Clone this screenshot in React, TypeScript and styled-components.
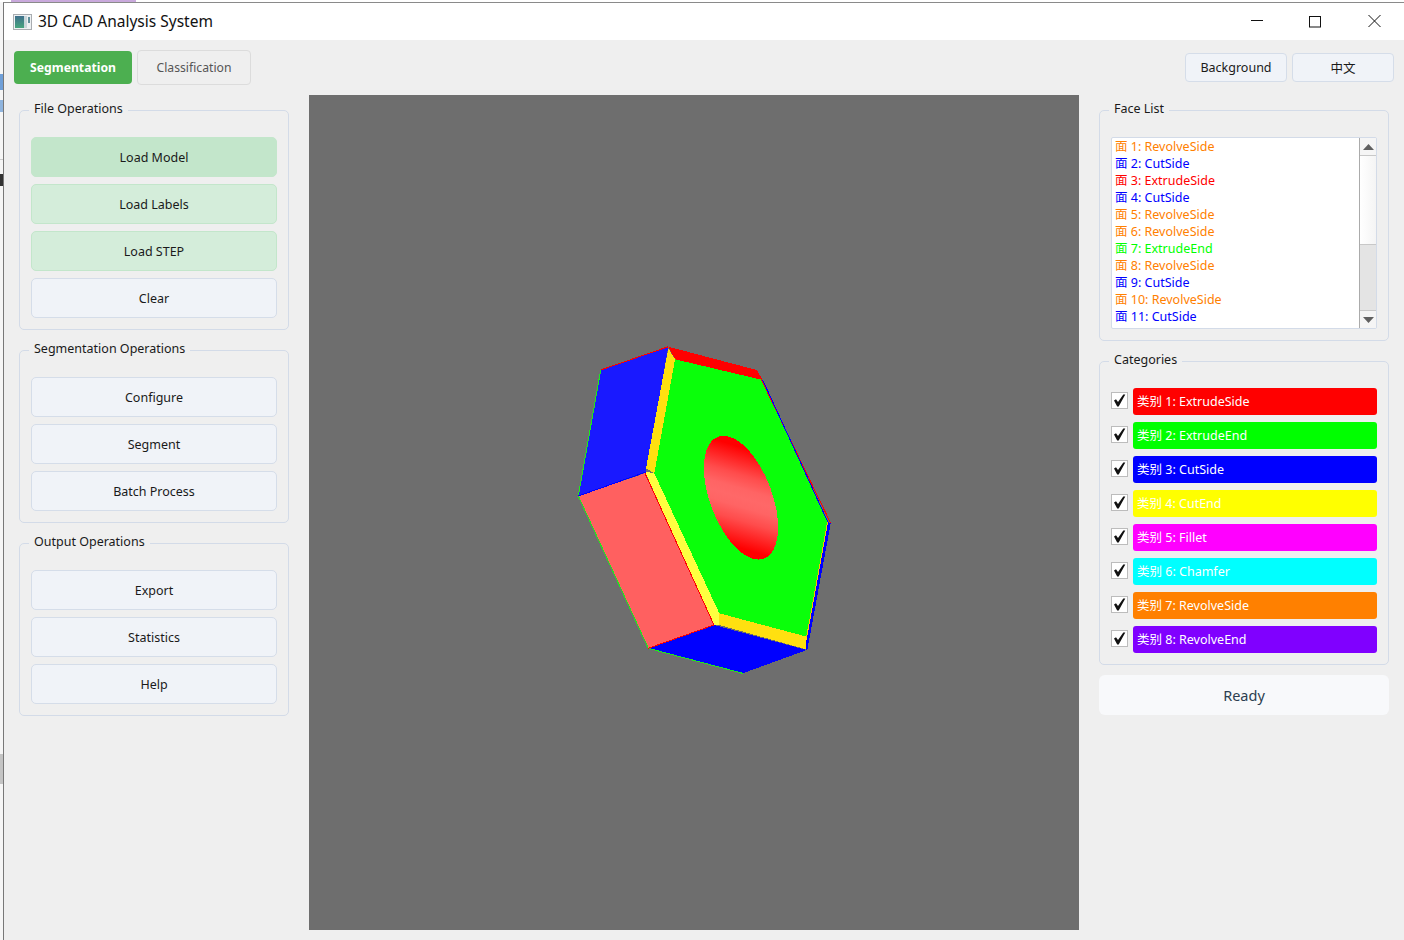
import React from 'react';
import styled, { createGlobalStyle } from 'styled-components';

const GlobalStyle = createGlobalStyle`
  html, body {
    margin: 0;
    padding: 0;
    background: #fff;
  }
  * {
    box-sizing: border-box;
  }
`;

const UI_FONT = `"Noto Sans", "Noto Sans CJK SC", sans-serif`;

const Page = styled.div`
  width: 1404px;
  height: 940px;
  overflow: hidden;
  display: flex;
  flex-direction: column;
  font-family: ${UI_FONT};
  font-size: 12.5px;
  color: #1a1a1a;
`;

/* what is left of the desktop behind the window */
const DesktopTop = styled.div`
  height: 2px;
  flex: none;
  background: linear-gradient(to right, #fff 11px, #c9a9dc 11px, #c9a9dc 136px, #fff 136px);
`;

const DesktopRow = styled.div`
  flex: 1;
  display: flex;
  min-height: 0;
`;

const DesktopLeft = styled.div`
  width: 3px;
  flex: none;
  background: linear-gradient(
    to bottom,
    #f6f6f6 72px,
    #6f9fd8 72px,
    #6f9fd8 88px,
    #f6f6f6 88px,
    #f6f6f6 98px,
    #8fb4de 98px,
    #8fb4de 110px,
    #f6f6f6 110px,
    #f6f6f6 157px,
    #ccc 157px,
    #ccc 158px,
    #f6f6f6 158px,
    #f6f6f6 172px,
    #333 172px,
    #333 184px,
    #f6f6f6 184px,
    #f6f6f6 752px,
    #c4c4c4 752px,
    #c4c4c4 782px,
    #f6f6f6 782px
  );
`;

const Window = styled.div`
  flex: 1;
  min-width: 0;
  display: flex;
  flex-direction: column;
  border-left: 1px solid #787878;
  border-top: 1px solid #8a8a8a;
  background: #efefef;
`;

const TitleBar = styled.div`
  height: 37px;
  flex: none;
  display: flex;
  align-items: center;
  background: #fff;
  padding-left: 9px;
`;

const TitleText = styled.span`
  margin: -2px 0 0 6px;
  font-size: 15.5px;
  color: #111;
`;

const WindowControls = styled.div`
  margin-left: auto;
  display: flex;
  align-items: center;
  height: 100%;
`;

const ControlSlot = styled.div`
  width: 59px;
  height: 100%;
  display: flex;
  align-items: center;
  justify-content: center;
`;

const Header = styled.div`
  height: 35px;
  flex: none;
  margin-top: 10px;
  padding: 0 10px;
  display: flex;
  align-items: center;
  justify-content: space-between;
`;

const HeaderGroup = styled.div<{ $gap: number }>`
  display: flex;
  align-items: center;
  gap: ${(p) => p.$gap}px;
`;

const Tab = styled.button<{ $active?: boolean }>`
  font-family: inherit;
  font-size: 12.2px;
  border-radius: 4px;
  padding: 0;
  ${(p) =>
    p.$active
      ? `
    width: 118px;
    height: 33px;
    border: 0;
    background: #4caf50;
    color: #fff;
    font-weight: 700;
  `
      : `
    width: 114px;
    height: 35px;
    border: 1px solid #dcdcdc;
    background: #efefef;
    color: #555;
  `}
`;

const TopButton = styled.button`
  width: 102px;
  height: 29px;
  padding: 0;
  font-family: inherit;
  font-size: 12.5px;
  color: #1a1a1a;
  background: #f0f3f8;
  border: 1px solid #d5dde9;
  border-radius: 4px;
`;

const Body = styled.div`
  flex: 1;
  min-height: 0;
  margin-top: 10px;
  padding: 0 15px 10px;
  display: grid;
  grid-template-columns: 270px 770px 290px;
  column-gap: 20px;
`;

const SideColumn = styled.div<{ $gap: number }>`
  padding-top: 6px;
  display: flex;
  flex-direction: column;
  gap: ${(p) => p.$gap}px;
`;

const Group = styled.fieldset`
  margin: 0;
  min-width: 0;
  padding: 18px 11px 11px;
  border: 1px solid #d3dbe8;
  border-radius: 5px;
`;

const GroupTitle = styled.legend`
  margin-left: -2px;
  padding: 0 5px;
  height: 18px;
  line-height: 15px;
  font-size: 12.5px;
  color: #1a1a1a;
`;

const ButtonStack = styled.div`
  display: flex;
  flex-direction: column;
  gap: 7px;
`;

type Tone = 'strong' | 'soft' | 'plain';

const toneStyles: Record<Tone, string> = {
  strong: 'background: #c3e6cb; border-color: #c3e6cb;',
  soft: 'background: #d4edda; border-color: #c3e6cb;',
  plain: 'background: #f0f3f8; border-color: #d5dde9;',
};

const ActionButton = styled.button<{ $tone: Tone }>`
  height: 40px;
  padding: 0;
  font-family: inherit;
  font-size: 12.5px;
  color: #1a1a1a;
  border: 1px solid;
  border-radius: 5px;
  ${(p) => toneStyles[p.$tone]}
`;

const Viewport = styled.div`
  background: #6e6e6e;
  min-height: 0;
`;

const ModelSvg = styled.svg`
  display: block;
  width: 770px;
  height: 835px;
`;

const FaceListBox = styled.div`
  height: 192px;
  display: flex;
  background: #fff;
  border: 1px solid #d3dbe8;
  border-radius: 2px;
  overflow: hidden;
`;

const FaceRows = styled.ul`
  flex: 1;
  margin: 0;
  padding: 0 0 0 3px;
  list-style: none;
`;

const FaceRow = styled.li<{ $color: string }>`
  height: 17px;
  line-height: 17px;
  font-size: 12.5px;
  white-space: nowrap;
  color: ${(p) => p.$color};
`;

const ScrollBar = styled.div`
  width: 17px;
  flex: none;
  display: flex;
  flex-direction: column;
  border-left: 1px solid #ababab;
`;

const ScrollArrow = styled.div`
  height: 17px;
  flex: none;
  display: flex;
  align-items: center;
  justify-content: center;
  background: #f5f5f5;
`;

const ScrollThumb = styled.div`
  height: 90px;
  flex: none;
  background: linear-gradient(to right, #fff, #f4f4f4);
  border-top: 1px solid #c8c8c8;
  border-bottom: 1px solid #c8c8c8;
`;

const ScrollTrack = styled.div`
  flex: 1;
  background: #e4e4e4;
  border-bottom: 1px solid #c8c8c8;
`;

const CategoryStack = styled.div`
  display: flex;
  flex-direction: column;
  gap: 7px;
`;

const CategoryRow = styled.label`
  height: 27px;
  display: flex;
  align-items: center;
  gap: 5px;
`;

const CheckBox = styled.span`
  width: 17px;
  height: 17px;
  flex: none;
  margin-top: -2px;
  display: flex;
  align-items: center;
  justify-content: center;
  background: #fff;
  border: 1px solid #bcbcbc;
`;

const CategoryLabel = styled.span<{ $color: string }>`
  flex: 1;
  height: 27px;
  line-height: 27px;
  padding-left: 4px;
  border-radius: 3px;
  font-size: 12.5px;
  color: #fff;
  background: ${(p) => p.$color};
`;

const StatusBox = styled.div`
  height: 40px;
  margin-top: -1px;
  display: flex;
  align-items: center;
  justify-content: center;
  background: #f8f9fb;
  border-radius: 6px;
  font-size: 14.5px;
  color: #2c3e50;
`;

const FILE_OPS: [string, Tone][] = [
  ['Load Model', 'strong'],
  ['Load Labels', 'soft'],
  ['Load STEP', 'soft'],
  ['Clear', 'plain'],
];

const SEGMENT_OPS = ['Configure', 'Segment', 'Batch Process'];
const OUTPUT_OPS = ['Export', 'Statistics', 'Help'];

const CATEGORIES = [
  { id: 1, name: 'ExtrudeSide', color: '#ff0000' },
  { id: 2, name: 'ExtrudeEnd', color: '#00ff00' },
  { id: 3, name: 'CutSide', color: '#0000ff' },
  { id: 4, name: 'CutEnd', color: '#ffff00' },
  { id: 5, name: 'Fillet', color: '#ff00ff' },
  { id: 6, name: 'Chamfer', color: '#00ffff' },
  { id: 7, name: 'RevolveSide', color: '#ff8000' },
  { id: 8, name: 'RevolveEnd', color: '#8000ff' },
];

// face index -> category id
const FACES = [7, 3, 1, 3, 7, 7, 2, 7, 3, 7, 3];

function AppIcon() {
  return (
    <svg width="19" height="16" viewBox="0 0 19 16">
      <defs>
        <linearGradient id="appIconFill" x1="0" y1="0" x2="0" y2="1">
          <stop offset="0" stopColor="#3f6f8c" />
          <stop offset="1" stopColor="#46a57e" />
        </linearGradient>
      </defs>
      <rect x="0.5" y="0.5" width="18" height="15" fill="#eef1f3" stroke="#a9adb1" />
      <rect x="2" y="2" width="9" height="12" fill="url(#appIconFill)" />
      <rect x="11" y="2" width="3" height="12" fill="#c9d6da" />
      <rect x="15" y="3" width="2" height="6" fill="#5f8f9a" />
    </svg>
  );
}

function WindowButtons() {
  return (
    <WindowControls>
      <ControlSlot>
        <svg width="13" height="13" viewBox="0 0 13 13">
          <path d="M1 5.5h12" stroke="#111" fill="none" />
        </svg>
      </ControlSlot>
      <ControlSlot>
        <svg width="13" height="13" viewBox="0 0 13 13">
          <rect x="0.5" y="1.5" width="11" height="10.5" stroke="#111" fill="none" />
        </svg>
      </ControlSlot>
      <ControlSlot>
        <svg width="13" height="13" viewBox="0 0 13 13">
          <path d="M0.5 0l12 12M12.5 0l-12 12" stroke="#111" fill="none" />
        </svg>
      </ControlSlot>
    </WindowControls>
  );
}

// the hex nut, in page coordinates (the viewBox starts at the viewport's corner)
function NutModel() {
  return (
    <ModelSvg viewBox="309 95 770 835" shapeRendering="crispEdges">
      <defs>
        <linearGradient id="holeFill" gradientUnits="userSpaceOnUse" x1="756.8" y1="445" x2="725.2" y2="550.4">
          <stop offset="0.06" stopColor="#ff0000" />
          <stop offset="0.3" stopColor="#ff4c4c" />
          <stop offset="0.42" stopColor="#ff6464" />
          <stop offset="0.5" stopColor="#ff6868" />
          <stop offset="0.58" stopColor="#ff6464" />
          <stop offset="0.7" stopColor="#ff4c4c" />
          <stop offset="0.94" stopColor="#ff0000" />
        </linearGradient>
      </defs>
      <polygon points="668.3,346.7 600.7,370 578.3,496 646,472" fill="#1919ff" />
      <polygon points="578.3,496 645,473.3 714,625 648.3,648.3" fill="#ff6060" />
      <polygon points="645,471.7 654.3,473.3 719.3,613.3 719.3,625 714,625" fill="#ffff40" />
      <polygon points="668.3,348.3 675,359.3 654.3,473.3 646,468.3" fill="#ffe010" />
      <polygon points="668.3,346.7 756.7,370 762.7,380 675,359.3" fill="#ff0000" />
      <polygon points="675,359.3 762.7,380 827.7,521.7 806.7,636.7 719.3,613.3 654.3,473.3" fill="#0aff0a" />
      <polygon points="719.3,613.3 806.7,636.7 806,649.3 719.3,625" fill="#ffe010" />
      <polygon points="714,625 806.7,650 742.7,673.3 648.3,648.3" fill="#0000ff" />
      <polygon points="827.7,521.7 830.7,523.3 807.3,650 806,649.3 806.7,636.7" fill="#0000ff" />
      <path
        d="M717.92 436.94A65 30.6 69.2 1 1 764.08 558.46A65 30.6 69.2 1 1 717.92 436.94Z"
        fill="url(#holeFill)"
      />
      <polyline points="600.7,370 578.3,496 648.3,648.3 742.7,673.3" fill="none" stroke="#1ee81e" strokeWidth="1" />
      <polyline points="600.7,370 668.3,346.7" fill="none" stroke="#ff0000" strokeWidth="1" />
      <polyline points="578.3,496 646,472" fill="none" stroke="#0000ff" strokeWidth="1" />
      <polyline points="645,473.3 714,625 648.3,648.3" fill="none" stroke="#ff0000" strokeWidth="1" />
      <polyline points="756.7,370 830.7,523.3" fill="none" stroke="#ff0000" strokeWidth="1" />
      <polyline points="762.7,380 827.7,521.7" fill="none" stroke="#0000ff" strokeWidth="1" />
      <polyline points="827.7,521.7 806.7,636.7" fill="none" stroke="#ffc000" strokeWidth="1" />
    </ModelSvg>
  );
}

function FaceList() {
  return (
    <FaceListBox>
      <FaceRows>
        {FACES.map((categoryId, i) => {
          const category = CATEGORIES[categoryId - 1];
          return (
            <FaceRow key={i} $color={category.color}>
              面 {i + 1}: {category.name}
            </FaceRow>
          );
        })}
      </FaceRows>
      <ScrollBar>
        <ScrollArrow>
          <svg width="11" height="6" viewBox="0 0 11 6">
            <path d="M5.5 0L11 6H0z" fill="#606060" />
          </svg>
        </ScrollArrow>
        <ScrollThumb />
        <ScrollTrack />
        <ScrollArrow>
          <svg width="11" height="6" viewBox="0 0 11 6">
            <path d="M0 0h11L5.5 6z" fill="#606060" />
          </svg>
        </ScrollArrow>
      </ScrollBar>
    </FaceListBox>
  );
}

export default function App() {
  return (
    <Page>
      <GlobalStyle />
      <DesktopTop />
      <DesktopRow>
        <DesktopLeft />
        <Window>
          <TitleBar>
            <AppIcon />
            <TitleText>3D CAD Analysis System</TitleText>
            <WindowButtons />
          </TitleBar>

          <Header>
            <HeaderGroup $gap={5}>
              <Tab $active>Segmentation</Tab>
              <Tab>Classification</Tab>
            </HeaderGroup>
            <HeaderGroup $gap={5}>
              <TopButton>Background</TopButton>
              <TopButton>中文</TopButton>
            </HeaderGroup>
          </Header>

          <Body>
            <SideColumn $gap={11}>
              <Group>
                <GroupTitle>File Operations</GroupTitle>
                <ButtonStack>
                  {FILE_OPS.map(([label, tone]) => (
                    <ActionButton key={label} $tone={tone}>
                      {label}
                    </ActionButton>
                  ))}
                </ButtonStack>
              </Group>
              <Group>
                <GroupTitle>Segmentation Operations</GroupTitle>
                <ButtonStack>
                  {SEGMENT_OPS.map((label) => (
                    <ActionButton key={label} $tone="plain">
                      {label}
                    </ActionButton>
                  ))}
                </ButtonStack>
              </Group>
              <Group>
                <GroupTitle>Output Operations</GroupTitle>
                <ButtonStack>
                  {OUTPUT_OPS.map((label) => (
                    <ActionButton key={label} $tone="plain">
                      {label}
                    </ActionButton>
                  ))}
                </ButtonStack>
              </Group>
            </SideColumn>

            <Viewport>
              <NutModel />
            </Viewport>

            <SideColumn $gap={11}>
              <Group>
                <GroupTitle>Face List</GroupTitle>
                <FaceList />
              </Group>
              <Group>
                <GroupTitle>Categories</GroupTitle>
                <CategoryStack>
                  {CATEGORIES.map((c) => (
                    <CategoryRow key={c.id}>
                      <CheckBox>
                        <svg width="13" height="13" viewBox="0 0 13 13">
                          <path d="M1 6.5L3 5.3L5 8L10.3 0.5H12.3L5.7 12.5H4.2Z" fill="#111" />
                        </svg>
                      </CheckBox>
                      <CategoryLabel $color={c.color}>
                        类别 {c.id}: {c.name}
                      </CategoryLabel>
                    </CategoryRow>
                  ))}
                </CategoryStack>
              </Group>
              <StatusBox>Ready</StatusBox>
            </SideColumn>
          </Body>
        </Window>
      </DesktopRow>
    </Page>
  );
}
